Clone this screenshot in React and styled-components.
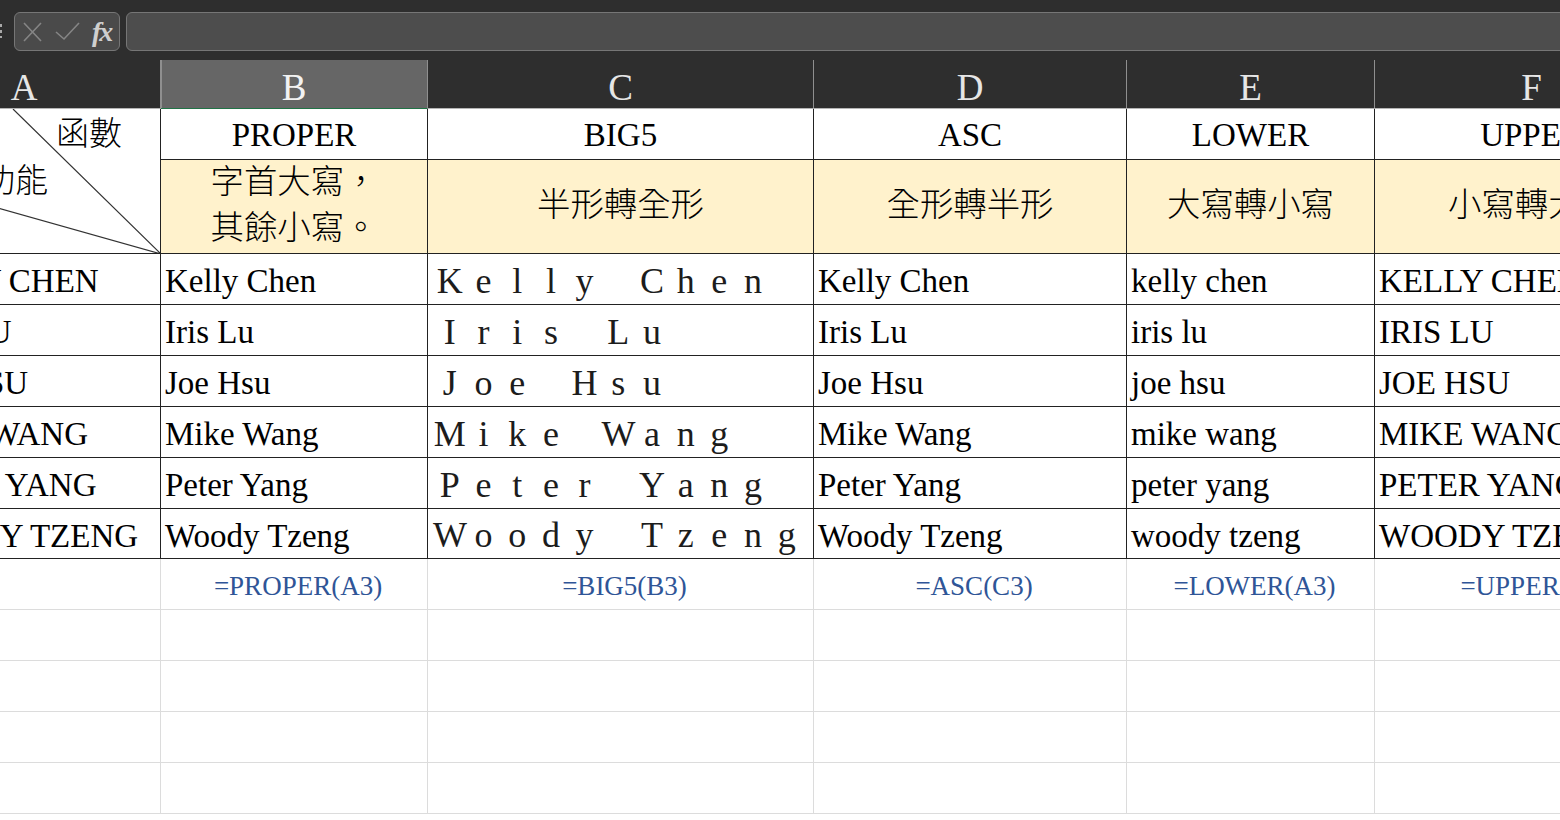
import React from 'react'
import styled, { createGlobalStyle } from 'styled-components'

const GlobalStyle = createGlobalStyle`
    html, body {
        margin: 0;
        width: 1560px;
        height: 820px;
        overflow: hidden;
        background: #fff;
    }
`

const SERIF = `"Liberation Serif", "Noto Sans CJK TC", serif`
const CJK = `"Noto Sans CJK TC", "Liberation Serif", sans-serif`

const names = [
    ['KELLY CHEN', 'Kelly Chen', 'kelly chen', 'KELLY CHEN'],
    ['IRIS LU', 'Iris Lu', 'iris lu', 'IRIS LU'],
    ['JOE HSU', 'Joe Hsu', 'joe hsu', 'JOE HSU'],
    ['MIKE WANG', 'Mike Wang', 'mike wang', 'MIKE WANG'],
    ['PETER YANG', 'Peter Yang', 'peter yang', 'PETER YANG'],
    ['WOODY TZENG', 'Woody Tzeng', 'woody tzeng', 'WOODY TZENG'],
]

const columnLetters = ['A', 'B', 'C', 'D', 'E', 'F']

export default function App() {
    return (
        <Page>
            <GlobalStyle />
            <FormulaBar>
                <Handle />
                <ButtonGroup>
                    <svg width="24" height="24" viewBox="0 0 24 24">
                        <path d="M3 3 L20 21 M20 3 L3 21" stroke="#858585" strokeWidth="1.6" fill="none" />
                    </svg>
                    <svg width="28" height="24" viewBox="0 0 28 24">
                        <path d="M1 12 L9 19 L24 3" stroke="#858585" strokeWidth="1.6" fill="none" />
                    </svg>
                    <Fx>fx</Fx>
                </ButtonGroup>
                <FormulaInput />
            </FormulaBar>

            <Sheet>
                {columnLetters.map((letter) => (
                    <ColumnHead key={letter} $selected={letter === 'B'}>{letter}</ColumnHead>
                ))}

                <Corner>
                    <CornerLines viewBox="0 0 273 145" width="273" height="145">
                        <path d="M125 0 L273 145 M0 68 L273 145" stroke="#333" strokeWidth="1.2" fill="none" />
                    </CornerLines>
                    <CornerTop>函數</CornerTop>
                    <CornerBottom>功能</CornerBottom>
                </Corner>
                <FuncCell>PROPER</FuncCell>
                <FuncCell>BIG5</FuncCell>
                <FuncCell>ASC</FuncCell>
                <FuncCell>LOWER</FuncCell>
                <FuncCell>UPPER</FuncCell>

                <NoteCell>字首大寫，<br />其餘小寫。</NoteCell>
                <NoteCell>半形轉全形</NoteCell>
                <NoteCell>全形轉半形</NoteCell>
                <NoteCell>大寫轉小寫</NoteCell>
                <NoteCell>小寫轉大寫</NoteCell>

                {names.map(([upper, proper, lower, up]) => (
                    <React.Fragment key={upper}>
                        <NameCell $inset={9}>{upper}</NameCell>
                        <NameCell>{proper}</NameCell>
                        <WideCell>
                            {proper.split('').map((ch, i) => (
                                <WideChar key={i}>{ch}</WideChar>
                            ))}
                        </WideCell>
                        <NameCell>{proper}</NameCell>
                        <NameCell>{lower}</NameCell>
                        <NameCell>{up}</NameCell>
                    </React.Fragment>
                ))}

                <BlankCell />
                <FormulaCell>=PROPER(A3)</FormulaCell>
                <FormulaCell>=BIG5(B3)</FormulaCell>
                <FormulaCell>=ASC(C3)</FormulaCell>
                <FormulaCell>=LOWER(A3)</FormulaCell>
                <FormulaCell>=UPPER(A3)</FormulaCell>

                {Array.from({ length: 24 }).map((_, i) => (
                    <BlankCell key={i} />
                ))}
            </Sheet>
        </Page>
    )
}

const Page = styled.div`
    width: 1560px;
    height: 820px;
    overflow: hidden;
    display: flex;
    flex-direction: column;
    background: #fff;
`

const FormulaBar = styled.div`
    height: 60px;
    flex: none;
    box-sizing: border-box;
    padding: 12px 0 9px 14px;
    display: flex;
    gap: 6px;
    position: relative;
    background: #2e2e2e;
`

const Handle = styled.span`
    position: absolute;
    left: 0;
    top: 24px;
    width: 2px;
    height: 14px;
    background: repeating-linear-gradient(to bottom, #a8a8a8 0 3px, transparent 3px 6px);
`

const ButtonGroup = styled.div`
    width: 106px;
    box-sizing: border-box;
    display: flex;
    align-items: center;
    gap: 10px;
    padding-left: 6px;
    background: #4a4a4a;
    border: 1px solid #767676;
    border-radius: 6px;
`

const Fx = styled.span`
    font-family: ${SERIF};
    font-style: italic;
    font-weight: bold;
    font-size: 28px;
    letter-spacing: -2px;
    line-height: 1;
    color: #cfcfcf;
    margin-left: -1px;
`

const FormulaInput = styled.div`
    flex: 1;
    margin-right: -20px;
    background: #4d4d4d;
    border: 1px solid #767676;
    border-radius: 6px;
`

const Sheet = styled.div`
    flex: none;
    margin-left: -112px;
    display: grid;
    grid-template-columns: 273px 267px 386px 313px 248px 314px;
    grid-template-rows: 49px 51px 94px 51px 51px 51px 51px 51px 50px 51px 51px 51px 51px 51px;
    font-family: ${SERIF};
    font-size: 33px;
    color: #000;
`

const ColumnHead = styled.div`
    box-sizing: border-box;
    display: flex;
    align-items: center;
    justify-content: center;
    padding-top: 6px;
    font-size: 37px;
    line-height: 1;
    color: ${(p) => (p.$selected ? '#f2f2f2' : '#e6e6e6')};
    background: ${(p) => (p.$selected ? '#666666' : '#2e2e2e')};
    border-right: 1px solid #8f8f8f;
    box-shadow: ${(p) => (p.$selected ? 'inset 1px 0 0 #8f8f8f' : 'none')};
    border-bottom: 1px solid ${(p) => (p.$selected ? '#217346' : '#b5b5b5')};
`

const Cell = styled.div`
    box-sizing: border-box;
    display: flex;
    align-items: center;
    min-width: 0;
    white-space: nowrap;
    overflow: hidden;
    line-height: 1;
    background: #fff;
    border-right: 1px solid #222;
    border-bottom: 1px solid #222;
`

const Corner = styled(Cell)`
    grid-row: span 2;
    position: relative;
    flex-direction: column;
    align-items: stretch;
    font-family: ${CJK};
    font-weight: 300;
`

const CornerLines = styled.svg`
    position: absolute;
    left: 0;
    top: 0;
`

const CornerTop = styled.div`
    align-self: flex-end;
    margin: 6px 38px 0 0;
`

const CornerBottom = styled.div`
    margin: 14px 0 0 94px;
`

const FuncCell = styled(Cell)`
    justify-content: center;
    padding-top: 3px;
`

const NoteCell = styled(Cell)`
    justify-content: center;
    text-align: center;
    padding-bottom: 10px;
    font-family: ${CJK};
    font-size: 33.4px;
    font-weight: 300;
    line-height: 46px;
    background: #fff2cc;
`

const NameCell = styled(Cell)`
    padding: 5px 0 0 ${(p) => p.$inset ?? 4}px;
`

const WideCell = styled(Cell)`
    padding: 3px 0 0 5px;
    font-size: 36px;
    color: #1c1c1c;
`

const WideChar = styled.span`
    flex: none;
    width: 33.7px;
    text-align: center;
`

const FormulaCell = styled(Cell)`
    justify-content: center;
    padding: 4px 0 0 8px;
    font-size: 27px;
    color: #2f5597;
    border-right-color: #dcdcdc;
    border-bottom-color: #dcdcdc;
`

const BlankCell = styled(Cell)`
    border-right-color: #dcdcdc;
    border-bottom-color: #dcdcdc;
`
